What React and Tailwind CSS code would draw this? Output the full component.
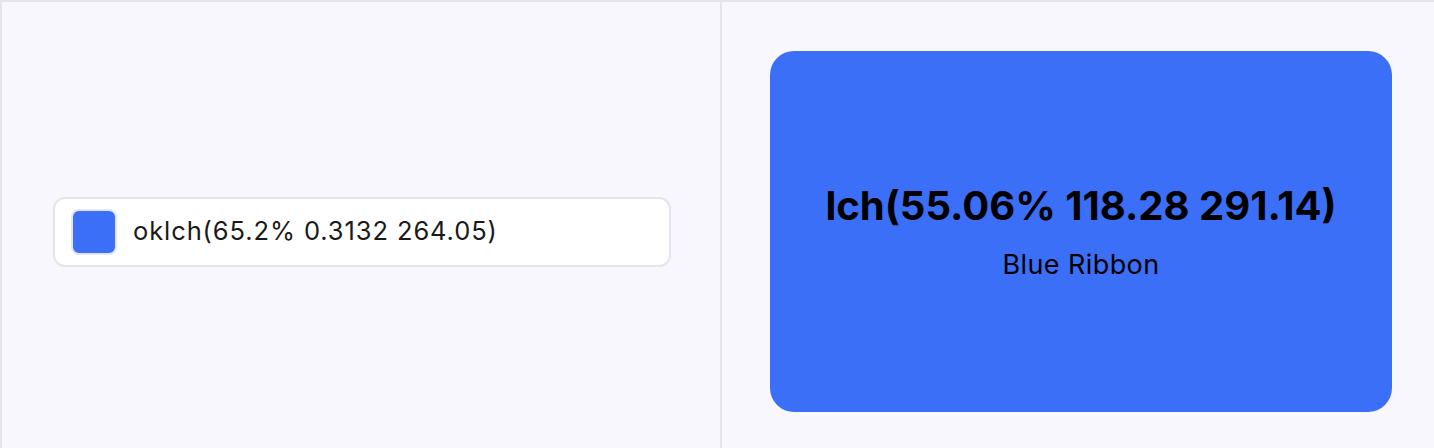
import React from 'react';

const font = { fontFamily: 'Inter, "Noto Sans", sans-serif' };

const ColorInput = ({ value, swatch }) => (
  <div className="flex h-[70px] w-full items-center gap-4 rounded-xl border-2 border-[#e4e4ec] bg-white px-4">
    <div className={`h-[46px] w-[46px] shrink-0 rounded-lg border-2 border-[#e4e4ec] ${swatch}`} />
    <span className="text-[25.5px] tracking-[0.9px] text-[#1a1a1a]">{value}</span>
  </div>
);

const ColorCard = ({ title, name }) => (
  <div className="flex h-[361px] w-[622px] shrink-0 flex-col items-center justify-center rounded-3xl bg-[#3b6ff8] text-black">
    <p className="text-[40px] font-bold leading-[50px]">{title}</p>
    <p className="mt-4 text-[27px] leading-9 tracking-[0.4px]">{name}</p>
  </div>
);

export default function App() {
  return (
    <div className="h-[448px] overflow-hidden bg-[#f8f7fd]" style={font}>
      <div className="flex h-[461px] w-[1440px] border-l-2 border-t-2 border-[#e4e4ec]">
        <div className="flex w-[718px] shrink-0 items-center pl-[51px] pr-[49px]">
          <ColorInput value="oklch(65.2% 0.3132 264.05)" swatch="bg-[#3b6ff8]" />
        </div>
        <div className="w-[2px] shrink-0 bg-[#e4e4ec]" />
        <div className="flex flex-1 items-center pl-12">
          <ColorCard title="lch(55.06% 118.28 291.14)" name="Blue Ribbon" />
        </div>
      </div>
    </div>
  );
}
